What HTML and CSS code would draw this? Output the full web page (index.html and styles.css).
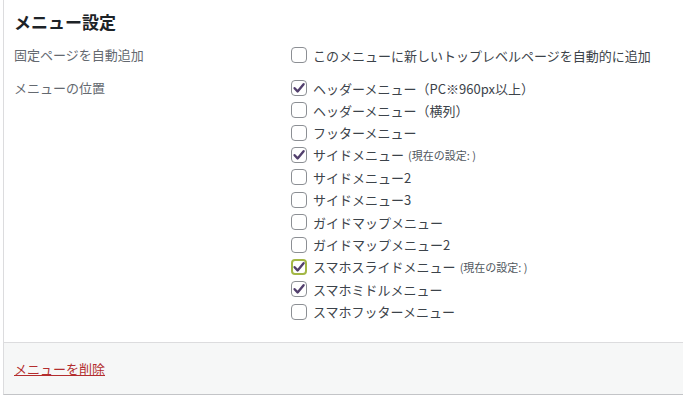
FILE: index.html
```html
<!DOCTYPE html>
<html>
<head>
    <title>メニュー設定</title>
    <link rel="stylesheet" href="styles.css">
</head>
<body>
    <div class="panel">
        <div class="panel-body">
            <h3 class="panel-title">メニュー設定</h3>

            <div class="setting">
                <div class="setting-label">固定ページを自動追加</div>
                <ul class="options">
                    <li><span class="box"></span>このメニューに新しいトップレベルページを自動的に追加</li>
                </ul>
            </div>

            <div class="setting setting-locations">
                <div class="setting-label">メニューの位置</div>
                <ul class="options">
                    <li><span class="box checked"><svg viewBox="0 0 16 16"><path d="M3.6 8.2 L6.6 11.4 L12.6 4.2"/></svg></span>ヘッダーメニュー（PC※960px以上）</li>
                    <li><span class="box"></span>ヘッダーメニュー（横列）</li>
                    <li><span class="box"></span>フッターメニュー</li>
                    <li><span class="box checked"><svg viewBox="0 0 16 16"><path d="M3.6 8.2 L6.6 11.4 L12.6 4.2"/></svg></span>サイドメニュー <small>(現在の設定: )</small></li>
                    <li><span class="box"></span>サイドメニュー2</li>
                    <li><span class="box"></span>サイドメニュー3</li>
                    <li><span class="box"></span>ガイドマップメニュー</li>
                    <li><span class="box"></span>ガイドマップメニュー2</li>
                    <li><span class="box checked focused"><svg viewBox="0 0 16 16"><path d="M3.6 8.2 L6.6 11.4 L12.6 4.2"/></svg></span>スマホスライドメニュー <small>(現在の設定: )</small></li>
                    <li><span class="box checked"><svg viewBox="0 0 16 16"><path d="M3.6 8.2 L6.6 11.4 L12.6 4.2"/></svg></span>スマホミドルメニュー</li>
                    <li><span class="box"></span>スマホフッターメニュー</li>
                </ul>
            </div>
        </div>

        <div class="panel-footer">
            <a href="#" class="delete-link">メニューを削除</a>
        </div>
    </div>
</body>
</html>
```

FILE: styles.css
```css
body {
    margin: 0;
    background: #fff;
    font-family: "Noto Sans CJK JP", "Noto Sans", sans-serif;
    font-size: 13px;
    color: #3c434a;
}
.panel {
    margin-left: 3px;
    border-left: 1px solid #dcdcde;
    border-bottom: 1px solid #c3c4c7;
    height: 395px;
    box-sizing: border-box;
    display: flex;
    flex-direction: column;
}
.panel-body {
    padding: 10px 10px 19px;
    flex: 1;
}
.panel-title {
    margin: 0 0 10px;
    font-size: 17px;
    line-height: 24px;
    font-weight: 700;
    color: #1d2327;
}
.setting {
    display: grid;
    grid-template-columns: 277px 1fr;
}
.setting-locations {
    margin-top: 11px;
}
.setting-label {
    line-height: 22px;
    color: #646970;
}
.options {
    list-style: none;
    margin: 0;
    padding: 0;
}
.options li {
    height: 22.4px;
    display: flex;
    align-items: center;
    white-space: nowrap;
}
.setting:first-child .options li, .options li:first-child {
    height: 22px;
}
.options small {
    font-size: 11px;
    color: #50575e;
    margin-left: 4px;
}
.box {
    width: 16px;
    height: 16px;
    box-sizing: border-box;
    border: 1px solid #8c8f94;
    border-radius: 4px;
    background: #fff;
    margin-right: 6px;
    flex: none;
    display: flex;
    align-items: center;
    justify-content: center;
}
.box svg {
    width: 16px;
    height: 16px;
    flex: none;
}
.box path {
    fill: none;
    stroke: #523f6d;
    stroke-width: 2.4;
    stroke-linecap: round;
    stroke-linejoin: round;
}
.box.focused {
    border: 2px solid #a3b745;
}
.panel-footer {
    height: 52px;
    border-top: 1px solid #dcdcde;
    background: #f6f7f7;
    padding-left: 10px;
    display: flex;
    align-items: center;
    box-sizing: border-box;
}
.delete-link {
    color: #b32d2e;
    text-decoration: underline;
}
```
